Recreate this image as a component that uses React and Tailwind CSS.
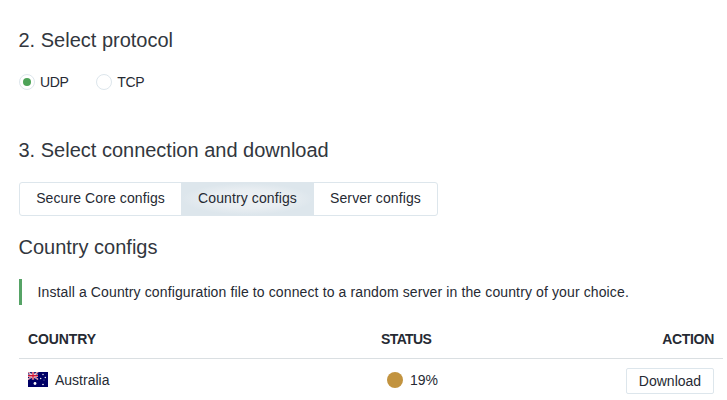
function Flag() {
  return (
    <svg width="20" height="15" viewBox="0 0 20 15" className="block shrink-0">
      <rect width="20" height="15" fill="#000066" />
      <path d="M0 0L10 7.5M10 0L0 7.5" stroke="#fff" strokeWidth="1.5" />
      <path d="M0 0L10 7.5M10 0L0 7.5" stroke="#d0304a" strokeWidth="0.7" />
      <path d="M5 0V7.5M0 3.75H10" stroke="#fff" strokeWidth="2.3" />
      <path d="M5 0V7.5M0 3.75H10" stroke="#cc1133" strokeWidth="1.3" />
      <g fill="#fff">
        <circle cx="7" cy="11.5" r="1.4" />
        <circle cx="15" cy="2.5" r="0.7" />
        <circle cx="12.7" cy="6.5" r="0.7" />
        <circle cx="17.3" cy="5.5" r="0.7" />
        <circle cx="15" cy="12.5" r="0.8" />
        <circle cx="16" cy="8" r="0.4" />
      </g>
    </svg>
  );
}

function Radio({ label, checked }) {
  return (
    <label className="flex items-center gap-[5px]">
      <span className="flex size-4 items-center justify-center rounded-full border border-[#dde6ec]">
        {checked && <span className="size-2 rounded-full bg-[#4da358]" />}
      </span>
      <span className="tracking-[-0.4px]">{label}</span>
    </label>
  );
}

function Heading({ children, className }) {
  return (
    <h2 className={"-ml-[0.5px] h-7 text-[20px] leading-7 whitespace-nowrap text-[#32373e] " + className}>
      {children}
    </h2>
  );
}

export default function App() {
  return (
    <main className="h-[400px] w-[727px] overflow-hidden bg-white pt-[26px] pr-1 pl-[19px] font-['Liberation_Sans',Arial,sans-serif] text-[14px] leading-[18px] text-[#262a33]">
      <Heading>2. Select protocol</Heading>
      <div className="mt-[19px] flex h-[18px] gap-7">
        <Radio label="UDP" checked />
        <Radio label="TCP" />
      </div>
      <Heading className="mt-[45px]">3. Select connection and download</Heading>
      <div className="mt-[18px] flex h-[34px] w-[419px] overflow-hidden rounded-[3px] border border-[#dde6ec] tracking-[0.1px] whitespace-nowrap">
        <button className="w-[161px] pb-[3px]">Secure Core configs</button>
        <button className="w-[133px] bg-[#dde6ec] bg-[radial-gradient(ellipse_at_center,#edf1f4_0%,#e9eef2_40%,#dde6ec_70%)] pb-[3px]">
          Country configs
        </button>
        <button className="w-[123px] pb-[3px]">Server configs</button>
      </div>
      <Heading className="mt-[17px]">Country configs</Heading>
      <p className="mt-[18px] h-[26px] border-l-3 border-[#56a366] pl-[15.5px] leading-[26px] tracking-[0.12px] whitespace-nowrap">
        Install a Country configuration file to connect to a random server in the country of your choice.
      </p>
      <table className="mt-[15px] w-[704px] table-fixed border-collapse">
        <thead>
          <tr className="h-[38px] border-b border-[#dadfe2]">
            <th className="w-[353px] pl-[9px] text-left tracking-[-0.12px]">COUNTRY</th>
            <th className="pl-[9px] text-left tracking-[-0.6px]">STATUS</th>
            <th className="w-[140px] pr-[9px] text-right tracking-[-0.3px]">ACTION</th>
          </tr>
        </thead>
        <tbody>
          <tr className="h-[43px]">
            <td className="pl-[9px]">
              <div className="flex items-center gap-[7px]">
                <Flag />
                Australia
              </div>
            </td>
            <td className="pl-[15px]">
              <div className="flex items-center gap-[7px]">
                <span className="size-4 rounded-full bg-[#c2933f]" />
                19%
              </div>
            </td>
            <td className="pt-[3px] pr-[9px]">
              <button className="ml-auto block h-[26px] w-[88px] rounded-[2px] border border-[#dde6ec]">
                Download
              </button>
            </td>
          </tr>
        </tbody>
      </table>
    </main>
  );
}
